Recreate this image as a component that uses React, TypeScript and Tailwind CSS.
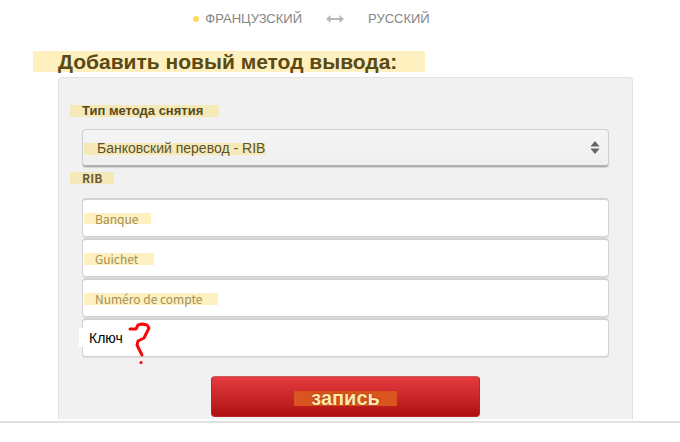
import { useState } from 'react'

const FIELDS = [
  { id: 'banque', placeholder: 'Banque', highlight: 'bg-[length:67px_11px]' },
  { id: 'guichet', placeholder: 'Guichet', highlight: 'bg-[length:70px_12px]' },
  { id: 'compte', placeholder: 'Numéro de compte', highlight: 'bg-[length:134px_12px]' },
]

const FIELD_CLASS =
  'block h-[39px] w-full rounded border border-t-2 border-[#d2d2d2] bg-white outline-none shadow-[0_1px_0_#dcdcdc]'

function LanguageBar() {
  return (
    <div className="flex h-[38px] items-center justify-center pr-[57px] text-[13px] text-[#858585]">
      <span className="mr-1.5 h-1.5 w-1.5 rounded-full bg-[#ffd95a]" />
      <span>ФРАНЦУЗСКИЙ</span>
      <svg className="mx-6 h-2.5 w-[18px]" viewBox="0 0 18 10" fill="#b9b9b9" aria-hidden="true">
        <path d="M0 5 4.5 1V4h9V1L18 5l-4.5 4V6h-9v3z" />
      </svg>
      <span>РУССКИЙ</span>
    </div>
  )
}

export default function App() {
  const [method, setMethod] = useState('rib')
  const [key, setKey] = useState('Ключ')

  return (
    <div className="bg-white font-['Liberation_Sans',Arial,sans-serif]">
      <LanguageBar />

      <main className="border-b-2 border-[#e0e0e0] pt-[13px] pr-[47px] pb-0.5 pl-[58px]">
        <h1 className="-ml-[25px] w-fit bg-[#fff0c0] pr-7 pl-[25px] text-[21px] leading-[21px] font-bold text-[#5a4a14]">
          Добавить новый метод вывода:
        </h1>

        <form
          className="mt-[5px] rounded-t border border-b-0 border-[#e0e0e0] bg-[#f1f1f1] px-[23px] pt-[27px] pb-0.5"
          onSubmit={(e) => e.preventDefault()}
        >
          <label
            htmlFor="method"
            className="-ml-3 block w-fit bg-[#f6e9b8] pr-4 pl-3 text-[13px] leading-[12px] font-bold text-[#574a1c]"
          >
            Тип метода снятия
          </label>

          <div className="relative mt-3">
            <select
              id="method"
              value={method}
              onChange={(e) => setMethod(e.target.value)}
              className="block h-[38px] w-full appearance-none rounded border border-b-2 border-[#cfcfcf] border-b-[#b0b0b0] bg-[linear-gradient(#f6e9b8,#f6e9b8),linear-gradient(#f5f5f5,#efefef)] bg-[length:182px_12px,100%_100%] bg-[position:1px_13px,0_0] bg-no-repeat pt-0.5 pl-3.5 text-[14px] text-[#5c5230] shadow-[0_1px_1px_#d0d0d0] outline-none"
            >
              <option value="rib">Банковский перевод - RIB</option>
            </select>
            <svg
              className="pointer-events-none absolute top-3 right-[9px] h-[13px] w-[10px]"
              viewBox="0 0 10 13"
              fill="#666"
              aria-hidden="true"
            >
              <path d="M5 0 9.6 5.5H0.4zM5 13 0.4 7.5h9.2z" />
            </svg>
          </div>

          <fieldset className="pt-[5px]">
            <legend className="float-left -ml-3 bg-[#f6e9b8] px-3 font-['Noto_Sans_CJK_SC',sans-serif] text-[12px] leading-[12px] font-bold text-[#6a5f3c]">
              RIB
            </legend>

            <div className="clear-both flex flex-col gap-px pt-[14px]">
              {FIELDS.map((f) => (
                <input
                  key={f.id}
                  type="text"
                  aria-label={f.placeholder}
                  placeholder={f.placeholder}
                  className={`${FIELD_CLASS} ${f.highlight} bg-[linear-gradient(#fff0c0,#fff0c0)] bg-[position:1px_13px] bg-no-repeat pl-3 font-['Noto_Sans_CJK_SC',sans-serif] text-[12px] text-[#574a1c] placeholder:text-[#a0915a]`}
                />
              ))}

              <div className="relative">
                <input
                  type="text"
                  aria-label="Ключ"
                  value={key}
                  onChange={(e) => setKey(e.target.value)}
                  className={`${FIELD_CLASS} pl-1.5 text-[14px] text-black`}
                />
                <span className="absolute top-2.5 -left-[3px] h-[19px] w-[6px] bg-white" />
                <svg
                  className="pointer-events-none absolute top-1 left-[46px] h-[43px] w-[24px]"
                  viewBox="0 0 24 43"
                  fill="none"
                  stroke="#f80808"
                  strokeWidth="3"
                  strokeLinecap="round"
                  strokeLinejoin="round"
                  aria-hidden="true"
                >
                  <path d="M2 7H8L10 3L14 2L19 3L21 6L18 12L16 16L10 19L9 23L12 29L14 33" />
                  <path d="M13 40.5h.1" />
                </svg>
              </div>
            </div>
          </fieldset>

          <button
            type="submit"
            className="mx-auto mt-[19px] block h-[41px] w-[269px] rounded border border-[#b8262a] border-t-[#cf5a5e] bg-linear-to-b from-[#e43b3f] to-[#b00d10] pt-1 text-[20px] font-bold text-[#ffe8b0]"
          >
            <span className="mx-auto block w-[103px] bg-[#d9541e] leading-[15px] [text-shadow:0_0_2px_#8a2a10]">
              запись
            </span>
          </button>
        </form>
      </main>
    </div>
  )
}
